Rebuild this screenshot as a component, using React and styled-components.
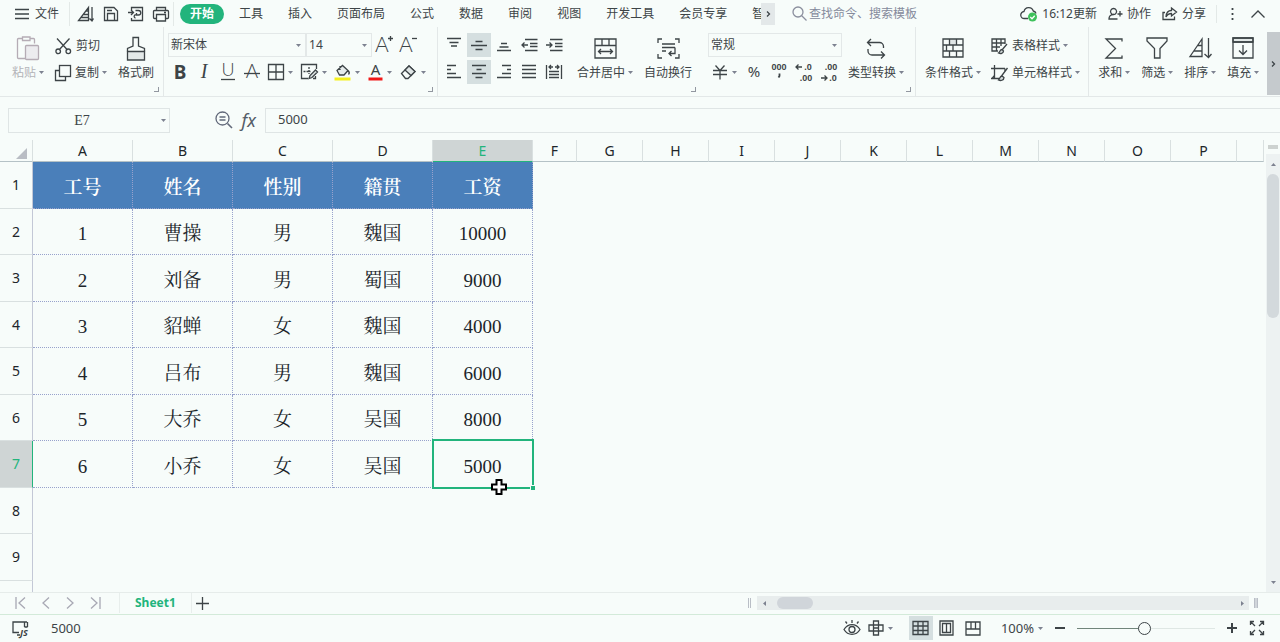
import { useState } from "react";
import styled, { createGlobalStyle } from "styled-components";

const ink = "#3d4447";
const green = "#22b47c";

const GlobalStyle = createGlobalStyle`
  * {
    box-sizing: border-box;
  }

  body {
    margin: 0;
    overflow: hidden;
    background: #f7fcfa;
    color: ${ink};
    font: 12px/18px "Noto Sans", "Noto Sans CJK SC", sans-serif;
  }

  button,
  input,
  select {
    margin: 0;
    padding: 0;
    border: 0;
    background: none;
    color: inherit;
    font: inherit;
  }
`;

const Page = styled.div`
  display: flex;
  flex-direction: column;
  height: 100vh;
`;

/* ---------- icons ---------- */

const Svg = styled.svg`
  display: block;
  flex: none;
  overflow: visible;
  fill: none;
  stroke: ${ink};
  stroke-width: 1.3;

  text {
    fill: ${ink};
    stroke: none;
    font-family: "Noto Sans", sans-serif;
    text-anchor: middle;
  }

  .thin {
    font-family: Lato, sans-serif;
    font-weight: 300;
  }

  .serif {
    font-family: "Liberation Serif", serif;
    font-style: italic;
  }

  .digits {
    font: 700 9px "Liberation Sans", sans-serif;
  }
`;

const glyphs = {
  menu: [14, 12, <path d="M0 1.500h14M0 6h14M0 10.500h14" />],
  sortMenu: [16, 16, <path d="M.5 14.500h10v-13zM5 8.500h5.500M3 11.500h7.500M7.500 5h3M14 1v14M11.500 12.500l2.500 2.500 1.500-2.500" />],
  save: [16, 16, <path d="M1.500 14.500v-13h9.500l3.500 3.500v9.500zM4.500 14.500v-7h7v7M4 4.500h5" />],
  exportDoc: [16, 16, <path d="M3.500 4V1.500h11v13h-11V12M0 6.500h5M3 4l2.500 2.500L3 9M7.500 4.500h3a2 2 0 0 1 0 4.500h-2v-2M8.500 9a1.600 1.600 0 1 0-1 3" />],
  print: [16, 16, <path d="M3.500 4.500v-3h9v3M3.500 12.500h-2a1 1 0 0 1-1-1v-6a1 1 0 0 1 1-1h13a1 1 0 0 1 1 1v6a1 1 0 0 1-1 1h-2M3.500 8.500h9v6.500h-9zM11 6.500h2" />],
  search: [15, 15, <><circle cx="6" cy="6" r="5" /><path d="M9.500 9.500l5 5" /></>],
  cloud: [18, 16, <><path d="M8 12.500H4.500a3.500 3.500 0 0 1-.5-7 4.800 4.800 0 0 1 9.300-.5c1.500.4 2.400 1.400 2.700 2.500" /><circle cx="12.500" cy="11" r="4.500" fill="#3fc15c" stroke="none" /><path d="M10.300 11l1.700 1.700 2.700-3" stroke="#fff" /></>],
  person: [15, 14, <path d="M5.500 7.500a3 3 0 1 1 .1 0c-3.500 0-4.600 2-4.600 4.500h8.500M12 4v5.500M9.500 7h5" />],
  share: [16, 14, <path d="M3 5.500H1v7h11.500v-3M9.500 1l5 4-5 4V6.500C7 6.500 5 8 4 10c.2-4 2-6.500 5.500-6.500z" />],
  dots: [3, 14, <path d="M1.500 1v2M1.500 6v2M1.500 11v2" strokeWidth="1.800" />],
  chevronUp: [14, 8, <path d="M.5 7.500L7 1l6.500 6.500" />],
  chevronRight: [5, 6, <path d="M1 .5L3.500 3 1 5.500" />],
  paste: [22, 25, <g stroke="#b5acb5"><path d="M8 22.500H1.500a1 1 0 0 1-1-1v-18a1 1 0 0 1 1-1h3.500M13 2.500h3.500a1 1 0 0 1 1 1v4" /><path d="M5.500 1h7.500v3.500H5.500z" /><rect x="8.500" y="9.500" width="13" height="14" rx="1" fill="#ececef" /></g>],
  cut: [17, 17, <><path d="M2 .5l10.500 11.500M14.500 .5L4 12" /><circle cx="3.200" cy="13.300" r="2.300" /><circle cx="13.300" cy="13.300" r="2.300" /></>],
  copy: [16, 16, <><path d="M4 5.500H.5v10h10V12" /><rect x="4.500" y=".5" width="11" height="11" /></>],
  painter: [20, 25, <><path d="M1.500 15.500h17v8.500h-17z" fill="#e3e9e8" /><path d="M1.500 15.500v-3l5.500-2.500V1.500h5.500V10l6 2.500v3" /></>],
  bold: [16, 20, <text x="8" y="17" fontSize="19" fontWeight="700">B</text>],
  italic: [16, 20, <text x="8" y="16" fontSize="20" className="serif">I</text>],
  underline: [16, 20, <><text x="8" y="14" fontSize="18" className="thin">U</text><path d="M1 17.500h14" /></>],
  strike: [16, 20, <><text x="8" y="16" fontSize="19" className="thin">A</text><path d="M0 11.500h16" /></>],
  grow: [18, 20, <><text x="7" y="17" fontSize="21" className="thin">A</text><path d="M13 3.500h5M15.500 1v5" /></>],
  shrink: [18, 20, <><text x="7" y="17" fontSize="21" className="thin">A</text><path d="M13 3.500h5" /></>],
  borders: [16, 16, <path d="M.5 .5h15v15H.5zM8 .5v15M.5 8h15" />],
  drawBorder: [17, 16, <><path d="M15.500 5V.5H.5v14H7" /><path d="M2.500 7.500h7M8 3v7" strokeDasharray="2 1" /><path d="M8 14.500l1-3 5.500-5.500 2 2-5.500 5.500zM12 14.500h2.500V12" fill="#dce3e3" /></>],
  fill: [17, 17, <><path d="M3 6.500L8.500 1.500l5.500 5-4 4.500H5.500zM6 2v4M14 6.500c1.500 1.500 1.500 3 .5 4" fill="#e6ecec" /><path d="M.5 15h16" stroke="#f5f01c" strokeWidth="3" /></>],
  fontColor: [15, 17, <><text x="7.500" y="11" fontSize="15">A</text><path d="M.5 15h14" stroke="#f01818" strokeWidth="3" /></>],
  eraser: [17, 16, <><path d="M1.500 9.500L9 2l6 5.500-7 7H5.500z" /><path d="M5 6l6 5.500L15 7.500 9 2z" fill="#e0e6e6" /></>],
  alignTop: [14, 18, <path d="M0 2.500h14M2.500 6.500h9M4 10h6" />],
  alignMiddle: [16, 12, <path d="M4.500 2.500h7M0 6.500h16M4.500 10.500h7" />],
  alignBottom: [14, 12, <path d="M4 4.500h6M2.500 8h9M0 11.500h14" />],
  outdent: [17, 14, <path d="M4 1.500h12.500M9 5.500h7.500M9 8.500h7.500M4 12.500h12.500M1 7h6M3.500 4.500L1 7l2.500 2.500" />],
  indent: [17, 14, <path d="M4 1.500h12.500M9 5.500h7.500M9 8.500h7.500M4 12.500h12.500M0 7h6M3.500 4.500L6 7 3.500 9.500" />],
  alignLeft: [14, 14, <path d="M0 .5h9M0 4.500h4M0 8.500h9M0 12.500h14" />],
  alignCenter: [14, 14, <path d="M0 .5h14M4.500 4.500h5M0 8.500h14M3.500 12.500h7" />],
  alignRight: [14, 14, <path d="M5 .5h9M10 4.500h4M5 8.500h9M0 12.500h14" />],
  justify: [14, 14, <path d="M0 .5h14M0 4.500h14M0 8.500h14M0 12.500h14" />],
  distribute: [16, 14, <path d="M.5 0v14M15.500 0v14M3 6.500h10M3 9.500h10M3 12.500h10M3 2h4M5 0L3 2l2 2M9 2h4M11 0l2 2-2 2" />],
  merge: [23, 21, <path d="M1 1h21v19H1zM1 7.500h21M8 1v6.500M15 1v6.500M4.500 13.500h14M7 11l-2.500 2.500L7 16M16 11l2.500 2.500L16 16" />],
  wrap: [23, 21, <path d="M1 5V1h4M18 1h4v4M22 16v4h-4M5 20H1v-4M5 6h13M5 9.500h13M5 13h4M18 9.500v6h-6M14.500 13L12 15.500l2.500 2.500" />],
  yen: [16, 16, <path d="M3.500 1.500L8 6.500l4.500-5M1 6.500h14M1 10.500h14M8 6.500v9" />],
  percent: [14, 16, <text x="7" y="13" fontSize="15">%</text>],
  thousands: [18, 18, <><text x="9" y="7" className="digits">000</text><path d="M9.500 10.500v2.500l-1 1.500" strokeWidth="1.800" /></>],
  moreDecimals: [18, 18, <><path d="M7 4H1M3.500 1.500L1 4l2.500 2.500" /><text x="13" y="7" className="digits">.0</text><text x="11" y="18" className="digits">.00</text></>],
  lessDecimals: [18, 18, <><text x="11" y="7" className="digits">.00</text><path d="M1 15h6M4.500 12.500L7 15l-2.500 2.500" /><text x="13" y="18" className="digits">.0</text></>],
  convert: [20, 21, <path d="M5 1L1.500 4.500 5 8M1.500 4.500h12a4 4 0 0 1 4 4v1.500M15 13.500l3.500 3.500-3.500 3.500M18.500 17H6a4 4 0 0 1-4-4v-2" />],
  condition: [22, 20, <><path d="M7.500 1h7v6h-7z" fill="#e0e6e6" stroke="none" /><path d="M1 1h20v18H1zM1 7h20M1 13h20M7.500 1v6M14.500 1v6M4.500 7v6M11 7v6M7.500 13v6M14.500 13v6" /></>],
  tableStyle: [17, 17, <><path d="M14 6V1H1v12h6M1 5h13M1 9h8M5.500 1v12M10 1v7" /><path d="M16 6l-5 6M11 11.500c-2 0-2 2.500-3.500 3.500 2 1 5 .5 5-2z" fill="#d5dcdc" /></>],
  cellStyle: [17, 17, <><path d="M0 3.500h14M3.500 0v14M14 3.500V6M0 13.500h8M3.500 10.500L1 13.500" /><path d="M16.500 3l-6 8M11 11c-2 0-2 2.500-3.500 4 2 1 5.500.5 5.500-2.500z" fill="#d5dcdc" /></>],
  sum: [18, 21, <path d="M17 3.500V1H1l9.500 9.500L1 20h16v-2.500" />],
  filter: [22, 22, <path d="M1 1h20v3l-7 7.500V21H8.500v-9.500L1 4z" />],
  sort: [23, 22, <path d="M1 19.500h12V2zM5 14h8M8.500 8.500H13M19.500 1v19.500M15.500 17l4 3.500 3-3.500" />],
  fillDown: [22, 22, <><path d="M1 1h20v4H1z" fill="#e3e9e8" /><path d="M1 1h20v20H1zM1 5h20M11 8v9M7 13.500l4 4 4-4" /></>],
  zoomOut: [18, 18, <><circle cx="7.500" cy="7.500" r="6.500" /><path d="M4.500 6h6M4.500 9h6M12.500 12.500l4.500 4.500" strokeWidth="1.600" /></>],
  first: [11, 12, <path d="M1 0v12M10 .5L4 6l6 5.500" stroke="#a8a8b4" />],
  prev: [8, 12, <path d="M7 .5L1 6l6 5.500" stroke="#a8a8b4" />],
  next: [8, 12, <path d="M1 .5L7 6l-6 5.500" stroke="#a8a8b4" />],
  last: [11, 12, <path d="M10 0v12M1 .5L7 6l-6 5.500" stroke="#a8a8b4" />],
  plus: [13, 13, <path d="M0 6.500h13M6.500 0v13" />],
  script: [17, 15, <><path d="M7 11.500H1V1h14M12.500 1v5M15.500 1v5M12.500 6h3M5 14h3" /><text x="12" y="15" fontSize="9" fontWeight="700" fontStyle="italic">JS</text></>],
  eye: [18, 16, <><path d="M1 9.500c4-6.500 12-6.500 16 0-4 6.500-12 6.500-16 0zM9 0v3M2.500 1.500l1.500 2M15.500 1.500l-1.500 2" /><circle cx="9" cy="9.500" r="3" /></>],
  cross: [16, 16, <path d="M5.500 1h5v14h-5zM1 5h14v6H1zM5.500 8h5" />],
  normalView: [17, 14, <path d="M1 .5h15v13H1zM1 5h15M1 9.500h15M6 .5v13M11 .5v13" />],
  pageView: [15, 16, <><path d="M1 1h13v14H1z" /><path d="M3.500 3.500h8v9h-8zM7.500 3.500v9" /></>],
  layoutView: [16, 15, <path d="M1 1h14v13H1zM1 8h14M6 1v7M10.500 1v7" />],
  minusBold: [10, 10, <path d="M0 5h10" strokeWidth="2" />],
  plusBold: [10, 10, <path d="M0 5h10M5 0v10" strokeWidth="2" />],
  fullscreen: [16, 16, <path d="M1.500 5v-3.500H5M1.500 1.500L6 6M11 1.500h3.500V5M14.500 1.500L10 6M14.500 11v3.500H11M14.500 14.500L10 10M5 14.500H1.500V11M1.500 14.500L6 10" />],
  cursor: [16, 16, <path d="M5.500 1h5v4.500H15v5h-4.500V15h-5v-4.500H1v-5h4.500z" fill="#fff" stroke="#000" strokeWidth="2" />],
};

function Icon({ name }) {
  const [width, height, shape] = glyphs[name];
  return (
    <Svg width={width} height={height} viewBox={`0 0 ${width} ${height}`} aria-hidden="true">
      {shape}
    </Svg>
  );
}

const CaretSvg = styled.svg`
  display: block;
  flex: none;
  fill: #7d8290;
`;

function Caret() {
  return (
    <CaretSvg width="5" height="3" viewBox="0 0 5 3" aria-hidden="true">
      <path d="M0 0h5L2.500 3z" />
    </CaretSvg>
  );
}

/* ---------- menu bar ---------- */

const MenuBar = styled.header`
  display: flex;
  flex: none;
  align-items: center;
  height: 27px;
  padding: 0 15px;
  white-space: nowrap;
`;

const PlainButton = styled.button`
  display: flex;
  flex: none;
  align-items: center;
  gap: ${({ $gap }) => $gap || 4}px;
`;

const QuickTools = styled.div`
  display: flex;
  gap: 9px;
  margin: 0 6px 0 10px;
  padding: 4px 4px 4px 8px;
  border: solid #e3e9e7;
  border-width: 0 1px;
`;

const TabList = styled.nav`
  display: flex;
  flex: none;
  align-items: center;
  gap: 25px;
  width: 581px;
  overflow: hidden;
`;

const Tab = styled.button`
  flex: none;
  height: 20px;
  padding: ${({ $active }) => ($active ? "0 10px" : "0")};
  margin-right: ${({ $active }) => ($active ? "-10px" : "0")};
  border-radius: 10px;
  background: ${({ $active }) => ($active ? green : "none")};
  color: ${({ $active }) => ($active ? "#fff" : "inherit")};
  font-weight: ${({ $active }) => ($active ? "700" : "400")};
`;

const TabScroll = styled.button`
  display: grid;
  flex: none;
  place-items: center;
  width: 14px;
  height: 22px;
  margin-right: 17px;
  background: #e3e8e9;
`;

const SearchBox = styled.label`
  display: flex;
  flex: 1;
  align-items: center;
  gap: 2px;

  svg {
    stroke: #8b8f9e;
  }

  input {
    width: 130px;
    outline: none;
  }

  input::placeholder {
    color: #858a9c;
    opacity: 1;
  }
`;

const Account = styled.div`
  display: flex;
  gap: 11px;
  padding-right: 10px;
  border-right: 1px solid #e3e9e7;
`;

const WindowTools = styled.div`
  display: flex;
  gap: 17px;
  padding-left: 14px;
`;

/* ---------- ribbon ---------- */

const RibbonBar = styled.section`
  display: flex;
  flex: none;
  height: 70px;
  border-bottom: 1px solid #e3e8e8;
  white-space: nowrap;
`;

const Group = styled.div`
  position: relative;
  display: flex;
  flex: none;
  align-items: flex-start;
  gap: ${({ $gap }) => $gap || 10}px;
  padding: 6px ${({ $end }) => $end}px 0 ${({ $start }) => $start}px;
  border-right: 1px solid ${({ $open }) => ($open ? "transparent" : "#e3e8e8")};
`;

const Corner = styled.span`
  position: absolute;
  right: 4px;
  bottom: 4px;
  width: 5px;
  height: 5px;
  border: solid #9297a0;
  border-width: 0 1px 1px 0;
`;

const BigButton = styled.button`
  display: grid;
  grid-template-rows: 30px 20px;
  justify-items: center;
  align-items: center;
  color: ${({ $muted }) => ($muted ? "#b3b4b8" : "inherit")};
`;

const Label = styled.span`
  display: flex;
  align-items: center;
  gap: 3px;

  ${CaretSvg} {
    margin-bottom: 2px;
  }
`;

const Stack = styled.div`
  display: grid;
  gap: 3px;
`;

const SmallButton = styled.button`
  display: flex;
  align-items: center;
  gap: 4px;
  height: 24px;
  padding-top: 2px;
`;

const Tools = styled.div`
  display: flex;
  align-items: center;
  gap: ${({ $gap }) => $gap || 0}px;
  height: 24px;
`;

const ToolButton = styled.button`
  display: flex;
  flex: none;
  align-items: center;
  justify-content: center;
  gap: 4px;
  width: ${({ $wide }) => ($wide ? 33 : 24)}px;
  height: 24px;
  background: ${({ $active }) => ($active ? "#d5dfe0" : "none")};
`;

const Combo = styled.span`
  display: flex;
  align-items: center;
  width: ${({ $width }) => $width}px;
  height: 24px;
  padding-right: 4px;
  border: 1px solid #e3e8e8;

  select {
    flex: 1;
    min-width: 0;
    height: 22px;
    padding-left: 2px;
    appearance: none;
    outline: none;
  }
`;

const RibbonMore = styled.button`
  display: grid;
  place-items: center;
  width: 13px;
  height: 63px;
  margin: 5px 0 0 auto;
  background: #c5cacd;
`;

/* ---------- formula bar ---------- */

const FormulaBar = styled.section`
  display: flex;
  flex: none;
  align-items: center;
  height: 43px;
  padding: 3px 0 0 8px;
`;

const NameBox = styled.span`
  display: flex;
  align-items: center;
  width: 162px;
  height: 25px;
  padding-right: 3px;
  border: 1px solid #dfe5e5;

  input {
    flex: 1;
    min-width: 0;
    padding: 2px 6px 0 0;
    outline: none;
    font: 14px/18px "Liberation Serif", serif;
    text-align: center;
  }
`;

const FormulaTools = styled.div`
  display: flex;
  align-items: center;
  justify-content: flex-end;
  gap: 9px;
  width: 95px;
  padding-right: 9px;

  svg {
    stroke: #62697a;
  }
`;

const FxButton = styled.button`
  color: #555c68;
  font: italic 18px/22px "Noto Sans", sans-serif;
`;

const FormulaInput = styled.input`
  flex: 1;
  height: 25px;
  padding: 0 0 2px 12px;
  border: 1px solid #dfe5e5;
  border-right: 0;
  outline: none;
  font-size: 13px;
`;

/* ---------- sheet ---------- */

const SheetArea = styled.main`
  display: flex;
  flex: 1;
  min-height: 0;
`;

const SheetClip = styled.div`
  flex: 1;
  min-width: 0;
  overflow: hidden;
`;

const Sheet = styled.table`
  width: 100%;
  border-spacing: 0;
  table-layout: fixed;
  color: #20252a;

  th,
  td {
    padding: 0;
  }
`;

const ColumnHead = styled.th`
  height: 22px;
  border-right: 1px solid #d9e0e0;
  border-bottom: 1px solid ${({ $active }) => ($active ? green : "#b5c2c6")};
  background: ${({ $active }) => ($active ? "#cfd5d5" : "none")};
  color: ${({ $active }) => ($active ? green : "inherit")};
  font-size: 14px;
  font-weight: 400;
  line-height: 21px;
`;

const CornerHead = styled(ColumnHead)`
  svg {
    display: block;
    margin: 5px 5px 0 auto;
    fill: #b9bdc4;
  }
`;

const Row = styled.tr`
  height: ${({ $tall }) => ($tall ? 47 : 46)}px;
`;

const RowHead = styled.th`
  border-right: 1px solid ${({ $active }) => ($active ? green : "#c3c8d6")};
  border-bottom: 1px solid #d9e0e0;
  background: ${({ $active }) => ($active ? "#cfd5d5" : "none")};
  color: ${({ $active }) => ($active ? green : "inherit")};
  font-size: 14px;
  font-weight: 400;
`;

const Cell = styled.td`
  position: relative;
  border-right: 1px dotted #98a2cc;
  border-bottom: 1px dotted #98a2cc;
  background: ${({ $title }) => ($title ? "#4a7fba" : "none")};
  color: ${({ $title }) => ($title ? "#fff" : "inherit")};
  font-family: "Liberation Serif", "Noto Serif CJK SC", "Noto Sans CJK SC", serif;
  font-size: 19px;
  font-weight: ${({ $title }) => ($title ? 600 : 400)};
  line-height: 24px;
  text-align: center;

  ${Sheet} && {
    padding-top: 5px;
  }
`;

const Selection = styled.span`
  position: absolute;
  inset: -2px -2px -2px -1px;
  border: 2px solid ${green};

  &::after {
    content: "";
    position: absolute;
    right: -3px;
    bottom: -3px;
    width: 4px;
    height: 4px;
    border: solid #f7fcfa;
    border-width: 1px 0 0 1px;
    background: ${green};
  }
`;

const Pointer = styled.span`
  position: absolute;
  right: 25px;
  bottom: -8px;
  z-index: 1;
`;

const VerticalBar = styled.div`
  display: flex;
  flex: none;
  flex-direction: column;
  align-items: center;
  width: 14px;
  margin-left: 2px;
  background: #edf2f2;
`;

const SplitHandle = styled.span`
  width: 100%;
  height: 14px;
  padding: 5px 2px;
  background: #f7fcfa;

  &::before {
    content: "";
    display: block;
    height: 4px;
    background: #cdd2d0;
  }
`;

const VerticalThumb = styled.span`
  width: 12px;
  height: 144px;
  border-radius: 6px;
  background: #d3d9dc;
`;

const ScrollButton = styled.button`
  display: grid;
  place-items: center;
  width: 14px;
  height: ${({ $tall }) => ($tall ? 20 : 14)}px;
  margin-top: ${({ $last }) => ($last ? "auto" : 0)};
  margin-bottom: ${({ $last }) => ($last ? "3px" : 0)};

  svg {
    transform: rotate(${({ $turn }) => $turn}deg);
  }
`;

/* ---------- bottom bars ---------- */

const SheetTabs = styled.nav`
  display: flex;
  flex: none;
  align-items: center;
  height: 23px;
  padding: 0 22px 1px 15px;
  border-top: 1px solid #e6ecea;
  border-bottom: 1px solid #d3ead9;
`;

const SheetNav = styled.div`
  display: flex;
  gap: 16px;
  width: 104px;
`;

const SheetTab = styled.button`
  height: 20px;
  margin-right: 4px;
  padding: 0 15px;
  border: solid #e8eeec;
  border-width: 0 1px;
  color: ${green};
  font-size: 12px;
  font-weight: 700;
`;

const ScrollRail = styled.div`
  display: flex;
  align-items: center;
  width: 41%;
  margin-left: auto;
`;

const HorizontalBar = styled.div`
  display: flex;
  flex: 1;
  align-items: center;
  height: 14px;
  background: #e8eded;
`;

const Grip = styled.span`
  width: ${({ $solid }) => ($solid ? 4 : 3)}px;
  height: 10px;
  margin: ${({ $solid }) => ($solid ? "0 0 0 5px" : "0 6px 0 0")};
  border: solid #b9bec6;
  border-width: 0 1px;
  background: ${({ $solid }) => ($solid ? "#d0d5da" : "none")};
`;

const HorizontalThumb = styled.span`
  width: 36px;
  height: 12px;
  margin: 0 auto 0 6px;
  border-radius: 6px;
  background: #d0d5da;
`;

const StatusBar = styled.footer`
  display: flex;
  flex: none;
  align-items: center;
  height: 27px;
  padding: 0 15px 1px 12px;
`;

const StatusValue = styled.output`
  margin-left: 22px;
  font-size: 13px;
`;

const ViewTools = styled.div`
  display: flex;
  align-items: center;
  gap: ${({ $gap }) => $gap}px;
  margin-left: ${({ $push }) => ($push ? "auto" : "16px")};
`;

const ViewButton = styled.button`
  display: grid;
  place-items: center;
  width: 24px;
  height: 24px;
  background: ${({ $active }) => ($active ? "#d5dfe0" : "none")};
`;

const ZoomButton = styled(PlainButton)`
  font-size: 13px;
`;

const ZoomSlider = styled.input`
  width: 138px;
  height: 14px;
  appearance: none;
  background: linear-gradient(90deg, #71857b 48%, #dfe7e4 48%) center / 100% 1px no-repeat;

  &::-webkit-slider-thumb {
    width: 13px;
    height: 13px;
    appearance: none;
    border: 1px solid ${ink};
    border-radius: 50%;
    background: #f7fcfa;
  }
`;

const tabs = ["开始", "工具", "插入", "页面布局", "公式", "数据", "审阅", "视图", "开发工具", "会员专享", "智"];

const columns = [
  ...["A", "B", "C", "D", "E"].map((name) => ({ name, width: 100 })),
  { name: "F", width: 44 },
  ..."GHIJKLMNOP".split("").map((name) => ({ name, width: 66 })),
];

const rows = [
  ["工号", "姓名", "性别", "籍贯", "工资"],
  ["1", "曹操", "男", "魏国", "10000"],
  ["2", "刘备", "男", "蜀国", "9000"],
  ["3", "貂蝉", "女", "魏国", "4000"],
  ["4", "吕布", "男", "魏国", "6000"],
  ["5", "大乔", "女", "吴国", "8000"],
  ["6", "小乔", "女", "吴国", "5000"],
  [],
  [],
  [],
];

function Big({ icon, label, caret, muted }) {
  return (
    <BigButton type="button" $muted={muted}>
      <Icon name={icon} />
      <Label>
        {label}
        {caret && <Caret />}
      </Label>
    </BigButton>
  );
}

function Small({ icon, label, caret }) {
  return (
    <SmallButton type="button">
      <Icon name={icon} />
      <Label>
        {label}
        {caret && <Caret />}
      </Label>
    </SmallButton>
  );
}

function Tool({ icon, label, wide, active }) {
  return (
    <ToolButton type="button" aria-label={label} $wide={wide} $active={active}>
      <Icon name={icon} />
      {wide && <Caret />}
    </ToolButton>
  );
}

function Select({ label, value, width }) {
  return (
    <Combo $width={width}>
      <select aria-label={label} defaultValue={value}>
        <option>{value}</option>
      </select>
      <Caret />
    </Combo>
  );
}

function Menu() {
  return (
    <MenuBar>
      <PlainButton type="button" $gap={6}>
        <Icon name="menu" />
        文件
      </PlainButton>
      <QuickTools>
        <PlainButton type="button" aria-label="排序"><Icon name="sortMenu" /></PlainButton>
        <PlainButton type="button" aria-label="保存"><Icon name="save" /></PlainButton>
        <PlainButton type="button" aria-label="输出"><Icon name="exportDoc" /></PlainButton>
        <PlainButton type="button" aria-label="打印"><Icon name="print" /></PlainButton>
      </QuickTools>
      <TabList>
        {tabs.map((tab) => (
          <Tab key={tab} type="button" $active={tab === "开始"}>
            {tab}
          </Tab>
        ))}
      </TabList>
      <TabScroll type="button" aria-label="更多选项卡">
        <Icon name="chevronRight" />
      </TabScroll>
      <SearchBox>
        <Icon name="search" />
        <input aria-label="搜索" placeholder="查找命令、搜索模板" />
      </SearchBox>
      <Account>
        <PlainButton type="button"><Icon name="cloud" />16:12更新</PlainButton>
        <PlainButton type="button"><Icon name="person" />协作</PlainButton>
        <PlainButton type="button"><Icon name="share" />分享</PlainButton>
      </Account>
      <WindowTools>
        <PlainButton type="button" aria-label="更多"><Icon name="dots" /></PlainButton>
        <PlainButton type="button" aria-label="收起"><Icon name="chevronUp" /></PlainButton>
      </WindowTools>
    </MenuBar>
  );
}

function Ribbon() {
  return (
    <RibbonBar>
      <Group $start={12} $end={9} $gap={11}>
        <Big icon="paste" label="粘贴" caret muted />
        <Stack>
          <Small icon="cut" label="剪切" />
          <Small icon="copy" label="复制" caret />
        </Stack>
        <Big icon="painter" label="格式刷" />
        <Corner />
      </Group>
      <Group $start={4} $end={8}>
        <Stack>
          <Tools>
            <Select label="字体" value="新宋体" width={138} />
            <Select label="字号" value="14" width={66} />
            <Tool icon="grow" label="增大字号" />
            <Tool icon="shrink" label="减小字号" />
          </Tools>
          <Tools>
            <Tool icon="bold" label="加粗" />
            <Tool icon="italic" label="倾斜" />
            <Tool icon="underline" label="下划线" />
            <Tool icon="strike" label="删除线" />
            <Tool icon="borders" label="边框" wide />
            <Tool icon="drawBorder" label="绘制边框" wide />
            <Tool icon="fill" label="填充颜色" wide />
            <Tool icon="fontColor" label="字体颜色" wide />
            <Tool icon="eraser" label="清除" wide />
          </Tools>
        </Stack>
        <Corner />
      </Group>
      <Group $start={4} $end={8} $gap={11} $open>
        <Stack>
          <Tools $gap={1}>
            <Tool icon="alignTop" label="顶端对齐" />
            <Tool icon="alignMiddle" label="垂直居中" active />
            <Tool icon="alignBottom" label="底端对齐" />
            <Tool icon="outdent" label="减少缩进" />
            <Tool icon="indent" label="增加缩进" />
          </Tools>
          <Tools $gap={1}>
            <Tool icon="alignLeft" label="左对齐" />
            <Tool icon="alignCenter" label="居中" active />
            <Tool icon="alignRight" label="右对齐" />
            <Tool icon="justify" label="两端对齐" />
            <Tool icon="distribute" label="分散对齐" />
          </Tools>
        </Stack>
        <Big icon="merge" label="合并居中" caret />
        <Big icon="wrap" label="自动换行" />
        <Corner />
      </Group>
      <Group $start={7} $end={11} $gap={6}>
        <Stack>
          <Select label="数字格式" value="常规" width={134} />
          <Tools $gap={1}>
            <Tool icon="yen" label="货币" wide />
            <Tool icon="percent" label="百分比" />
            <Tool icon="thousands" label="千位分隔" />
            <Tool icon="moreDecimals" label="增加小数位" />
            <Tool icon="lessDecimals" label="减少小数位" />
          </Tools>
        </Stack>
        <Big icon="convert" label="类型转换" caret />
        <Corner />
      </Group>
      <Group $start={9} $end={8}>
        <Big icon="condition" label="条件格式" caret />
        <Stack>
          <Small icon="tableStyle" label="表格样式" caret />
          <Small icon="cellStyle" label="单元格样式" caret />
        </Stack>
      </Group>
      <Group $start={9} $end={4} $gap={11} $open>
        <Big icon="sum" label="求和" caret />
        <Big icon="filter" label="筛选" caret />
        <Big icon="sort" label="排序" caret />
        <Big icon="fillDown" label="填充" caret />
      </Group>
      <RibbonMore type="button" aria-label="更多功能">
        <Icon name="chevronRight" />
      </RibbonMore>
    </RibbonBar>
  );
}

function SheetGrid() {
  return (
    <Sheet>
      <colgroup>
        <col width={33} />
        {columns.map((column) => (
          <col key={column.name} width={column.width} />
        ))}
        <col />
      </colgroup>
      <thead>
        <tr>
          <CornerHead>
            <svg width="11" height="11" viewBox="0 0 11 11" aria-hidden="true">
              <path d="M11 0v11H0z" />
            </svg>
          </CornerHead>
          {columns.map((column) => (
            <ColumnHead key={column.name} $active={column.name === "E"}>
              {column.name}
            </ColumnHead>
          ))}
          <ColumnHead />
        </tr>
      </thead>
      <tbody>
        {rows.map((row, index) => (
          <Row key={index} $tall={index % 2 === 0}>
            <RowHead $active={index === 6}>{index < 9 ? index + 1 : ""}</RowHead>
            {row.map((value, column) => (
              <Cell key={column} $title={index === 0}>
                {value}
                {index === 6 && column === 4 && (
                  <>
                    <Selection />
                    <Pointer>
                      <Icon name="cursor" />
                    </Pointer>
                  </>
                )}
              </Cell>
            ))}
          </Row>
        ))}
      </tbody>
    </Sheet>
  );
}

function App() {
  const [formula, setFormula] = useState("5000");
  const [zoom, setZoom] = useState(49);

  return (
    <Page>
      <GlobalStyle />
      <Menu />
      <Ribbon />
      <FormulaBar>
        <NameBox>
          <input aria-label="名称框" defaultValue="E7" />
          <Caret />
        </NameBox>
        <FormulaTools>
          <PlainButton type="button" aria-label="浏览公式"><Icon name="zoomOut" /></PlainButton>
          <FxButton type="button">fx</FxButton>
        </FormulaTools>
        <FormulaInput
          aria-label="编辑栏"
          value={formula}
          onChange={(e) => setFormula(e.target.value)}
        />
      </FormulaBar>
      <SheetArea>
        <SheetClip>
          <SheetGrid />
        </SheetClip>
        <VerticalBar>
          <SplitHandle />
          <ScrollButton type="button" aria-label="向上滚动" $tall $turn={180}><Caret /></ScrollButton>
          <VerticalThumb />
          <ScrollButton type="button" aria-label="向下滚动" $last $turn={0}><Caret /></ScrollButton>
        </VerticalBar>
      </SheetArea>
      <SheetTabs>
        <SheetNav>
          <PlainButton type="button" aria-label="第一个"><Icon name="first" /></PlainButton>
          <PlainButton type="button" aria-label="上一个"><Icon name="prev" /></PlainButton>
          <PlainButton type="button" aria-label="下一个"><Icon name="next" /></PlainButton>
          <PlainButton type="button" aria-label="最后一个"><Icon name="last" /></PlainButton>
        </SheetNav>
        <SheetTab type="button">Sheet1</SheetTab>
        <PlainButton type="button" aria-label="新建工作表"><Icon name="plus" /></PlainButton>
        <ScrollRail>
          <Grip />
          <HorizontalBar>
            <ScrollButton type="button" aria-label="向左滚动" $turn={90}><Caret /></ScrollButton>
            <HorizontalThumb />
            <ScrollButton type="button" aria-label="向右滚动" $turn={-90}><Caret /></ScrollButton>
          </HorizontalBar>
          <Grip $solid />
        </ScrollRail>
      </SheetTabs>
      <StatusBar>
        <PlainButton type="button" aria-label="宏"><Icon name="script" /></PlainButton>
        <StatusValue>{formula}</StatusValue>
        <ViewTools $gap={7} $push>
          <PlainButton type="button" aria-label="护眼模式"><Icon name="eye" /></PlainButton>
          <PlainButton type="button" aria-label="阅读模式"><Icon name="cross" /><Caret /></PlainButton>
        </ViewTools>
        <ViewTools $gap={2}>
          <ViewButton type="button" aria-label="普通视图" $active><Icon name="normalView" /></ViewButton>
          <ViewButton type="button" aria-label="分页预览"><Icon name="pageView" /></ViewButton>
          <ViewButton type="button" aria-label="页面布局"><Icon name="layoutView" /></ViewButton>
        </ViewTools>
        <ViewTools $gap={12}>
          <ZoomButton type="button">100%<Caret /></ZoomButton>
          <PlainButton type="button" aria-label="缩小"><Icon name="minusBold" /></PlainButton>
          <ZoomSlider
            type="range"
            aria-label="缩放"
            value={zoom}
            onChange={(e) => setZoom(e.target.value)}
          />
          <PlainButton type="button" aria-label="放大"><Icon name="plusBold" /></PlainButton>
          <PlainButton type="button" aria-label="全屏"><Icon name="fullscreen" /></PlainButton>
        </ViewTools>
      </StatusBar>
    </Page>
  );
}

export default App;
